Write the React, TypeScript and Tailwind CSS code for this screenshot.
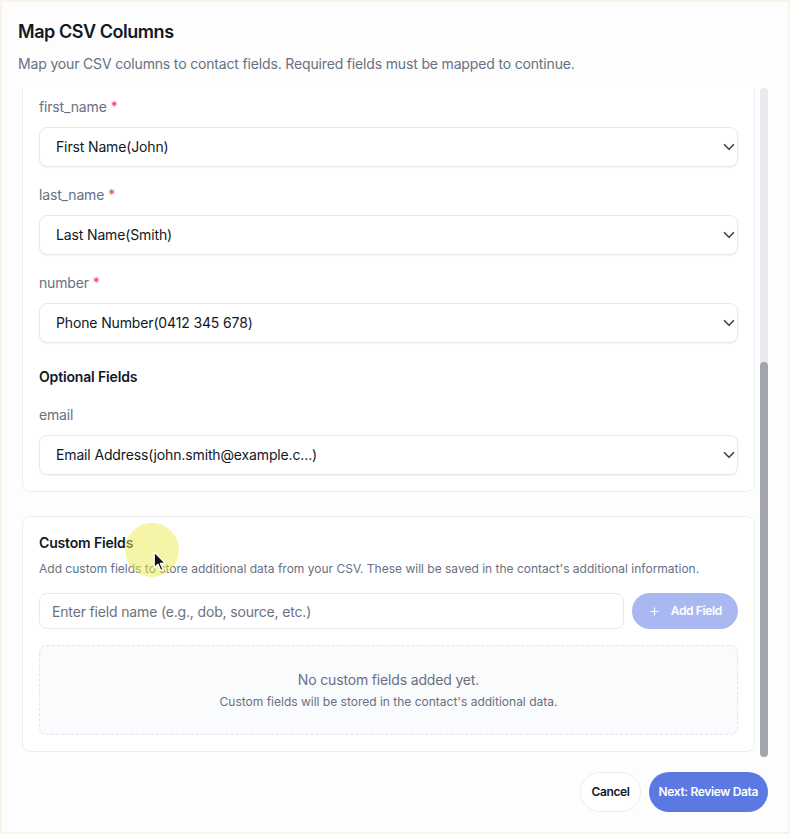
import React, { useLayoutEffect, useRef } from 'react';
import { ChevronDown, Plus } from 'lucide-react';

const FieldSelect: React.FC<{ value: string }> = ({ value }) => (
  <div className="relative">
    <select
      defaultValue={value}
      className="h-10 w-full appearance-none rounded-lg border border-[#e7e9ef] bg-white pl-4 pr-8 text-sm tracking-[-0.01em] text-[#111827] shadow-[0_1px_2px_rgba(16,24,40,0.05)] outline-none"
    >
      <option>{value}</option>
    </select>
    <ChevronDown
      size={18}
      strokeWidth={2.2}
      className="pointer-events-none absolute right-0 top-1/2 -translate-y-1/2 text-[#3f4350]"
    />
  </div>
);

const FieldLabel: React.FC<{ name: string; required?: boolean }> = ({ name, required }) => (
  <label className="mb-2.5 block text-sm leading-5 text-[#687083]">
    {name}
    {required && <span className="ml-1 text-[#ef4444]">*</span>}
  </label>
);

export default function App() {
  const scrollRef = useRef<HTMLDivElement>(null);

  useLayoutEffect(() => {
    const el = scrollRef.current;
    if (el) el.scrollTop = el.scrollHeight;
  }, []);

  return (
    <div
      className="relative h-screen w-full overflow-hidden border-2 border-[#fdf2e8] bg-[#fdfdfd] pl-4 pr-5 pt-4 tracking-[-0.01em] text-[#111827]"
      style={{ fontFamily: 'Inter, "Noto Sans", sans-serif' }}
    >
      <h2 className="text-lg leading-7 font-semibold tracking-[-0.025em] text-[#111827]">Map CSV Columns</h2>
      <p className="mt-2 text-sm leading-5 text-[#687083]">
        Map your CSV columns to contact fields. Required fields must be mapped to continue.
      </p>

      <div className="mt-[14px] flex h-[669px]">
        <div ref={scrollRef} className="flex-1 overflow-hidden pb-[5px] pl-1">
          <div className="rounded-lg border border-[#eceef2] bg-white p-4">
            <p className="mb-4 text-sm leading-5 font-semibold">Required Fields</p>
            <div className="flex flex-col gap-[18px]">
              <div>
                <FieldLabel name="first_name" required />
                <FieldSelect value="First Name(John)" />
              </div>
              <div>
                <FieldLabel name="last_name" required />
                <FieldSelect value="Last Name(Smith)" />
              </div>
              <div>
                <FieldLabel name="number" required />
                <FieldSelect value="Phone Number(0412 345 678)" />
              </div>
            </div>

            <p className="mt-6 text-sm leading-5 font-semibold text-[#111827]">Optional Fields</p>
            <div className="mt-[18px]">
              <FieldLabel name="email" />
              <FieldSelect value="Email Address(john.smith@example.c...)" />
            </div>
          </div>

          <div className="mt-6 rounded-lg border border-[#eceef2] bg-white p-4">
            <p className="text-sm leading-5 font-semibold text-[#111827]">Custom Fields</p>
            <p className="mt-2 text-xs leading-4 tracking-normal text-[#687083]">
              Add custom fields to store additional data from your CSV. These will be saved in the contact's additional information.
            </p>
            <div className="mt-4 flex gap-2">
              <input
                placeholder="Enter field name (e.g., dob, source, etc.)"
                className="h-9 flex-1 rounded-lg border border-[#e7e9ef] bg-white px-3 text-sm text-[#111827] outline-none placeholder:text-[#6b7280]"
              />
              <button
                disabled
                className="flex h-9 items-center gap-2.5 rounded-full bg-[#aab8f1] px-4 text-xs font-semibold tracking-[-0.03em] text-white"
              >
                <Plus size={13} strokeWidth={2} />
                Add Field
              </button>
            </div>
            <div className="mt-4 rounded-lg border border-dashed border-[#e3e5ea] bg-[#fafbfc] p-6 text-center">
              <p className="text-sm leading-5 text-[#687083]">No custom fields added yet.</p>
              <p className="mt-1 text-xs leading-4 tracking-normal text-[#687083]">
                Custom fields will be stored in the contact's additional data.
              </p>
            </div>
          </div>
        </div>

        {/* scrollbar */}
        <div className="ml-[5px] flex w-2 flex-col justify-end rounded-full bg-[#e9e9ee]">
          <div className="h-[395px] rounded-full bg-[#a2a5ad]" />
        </div>
      </div>

      <div className="mt-[15px] flex justify-end gap-2">
        <button className="h-10 rounded-full border border-[#eceef2] bg-white px-[10px] text-xs font-semibold tracking-[-0.03em] text-[#111827]">
          Cancel
        </button>
        <button className="h-10 rounded-full bg-[#5b79e2] px-[10px] text-xs font-semibold tracking-[-0.03em] text-white">
          Next: Review Data
        </button>
      </div>

      {/* pointer highlight from the screen recording */}
      <div className="pointer-events-none absolute left-[123px] top-[521px] h-[54px] w-[54px] rounded-full bg-[rgba(238,234,80,0.5)]" />
      <svg
        className="pointer-events-none absolute left-[151px] top-[549px]"
        width="14"
        height="21"
        viewBox="0 0 13 20"
      >
        <path d="M1 1 L1 16 L4.6 12.6 L7.2 18.5 L9.4 17.5 L6.9 11.8 L11.6 11.8 Z" fill="#111" stroke="#fff" strokeWidth="1.2" strokeLinejoin="round" />
      </svg>
    </div>
  );
}
